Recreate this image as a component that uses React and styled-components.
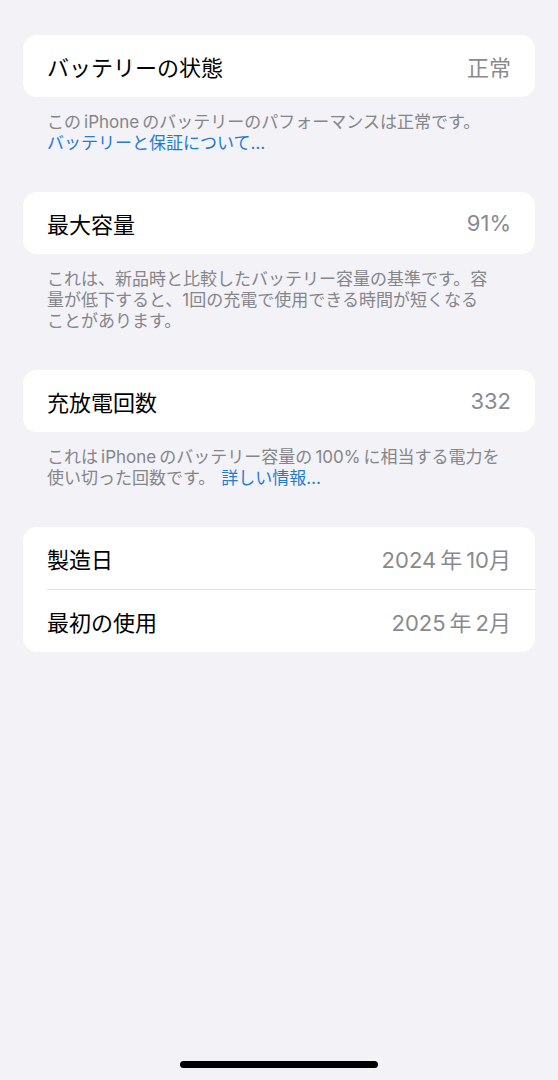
import React from 'react'
import styled, { createGlobalStyle } from 'styled-components'

const GlobalStyle = createGlobalStyle`
  html, body {
    margin: 0;
    padding: 0;
    background: #f2f2f7;
  }
  body {
    font-family: "Inter", "Noto Sans CJK JP", "Noto Sans", sans-serif;
    -webkit-font-smoothing: antialiased;
  }
`

const Screen = styled.div`
  min-height: 100vh;
  box-sizing: border-box;
  display: flex;
  flex-direction: column;
  padding: 35px 23px 0;
`

const Section = styled.section`
  margin-bottom: 38px;
`

const Card = styled.div`
  background: #ffffff;
  border-radius: 14px;
  overflow: hidden;
`

const Row = styled.div`
  height: 62px;
  padding: 0 24px;
  display: flex;
  align-items: center;
  justify-content: space-between;
`

const Label = styled.span`
  font-size: 22px;
  color: #000000;
`

const Value = styled.span`
  font-size: 22px;
  color: #8a8a8e;
`

const Divider = styled.div`
  height: 1px;
  margin-left: 24px;
  background: #e3e3e7;
`

const Footer = styled.p`
  margin: 15px 0 0;
  padding: 0 24px;
  font-size: 17px;
  line-height: 21px;
  color: #85858a;
`

const Link = styled.a`
  color: #1f7bd8;
  text-decoration: none;
  margin-left: ${p => (p.$spaced ? '6px' : '0')};
`

const HomeIndicator = styled.div`
  margin: auto auto 12px;
  width: 198px;
  height: 7px;
  border-radius: 4px;
  background: #000000;
`

// thin space between latin and kana, as the system text does
const T = '\u2009'

const InfoRow = ({ label, value }) => (
  <Row>
    <Label>{label}</Label>
    <Value>{value}</Value>
  </Row>
)

export default function App() {
  return (
    <>
      <GlobalStyle />
      <Screen>
        <Section>
          <Card>
            <InfoRow label="バッテリーの状態" value="正常" />
          </Card>
          <Footer>
            {`この${T}iPhone${T}のバッテリーのパフォーマンスは正常です。`}
            <br />
            <Link href="#">バッテリーと保証について…</Link>
          </Footer>
        </Section>

        <Section>
          <Card>
            <InfoRow label="最大容量" value="91%" />
          </Card>
          <Footer>
            これは、新品時と比較したバッテリー容量の基準です。容
            <br />
            量が低下すると、1回の充電で使用できる時間が短くなる
            <br />
            ことがあります。
          </Footer>
        </Section>

        <Section>
          <Card>
            <InfoRow label="充放電回数" value="332" />
          </Card>
          <Footer>
            {`これは${T}iPhone${T}のバッテリー容量の${T}100%${T}に相当する電力を`}
            <br />
            使い切った回数です。
            <Link href="#" $spaced>詳しい情報…</Link>
          </Footer>
        </Section>

        <Section>
          <Card>
            <InfoRow label="製造日" value={`2024${T}年${T}10月`} />
            <Divider />
            <InfoRow label="最初の使用" value={`2025${T}年${T}2月`} />
          </Card>
        </Section>

        <HomeIndicator />
      </Screen>
    </>
  )
}
